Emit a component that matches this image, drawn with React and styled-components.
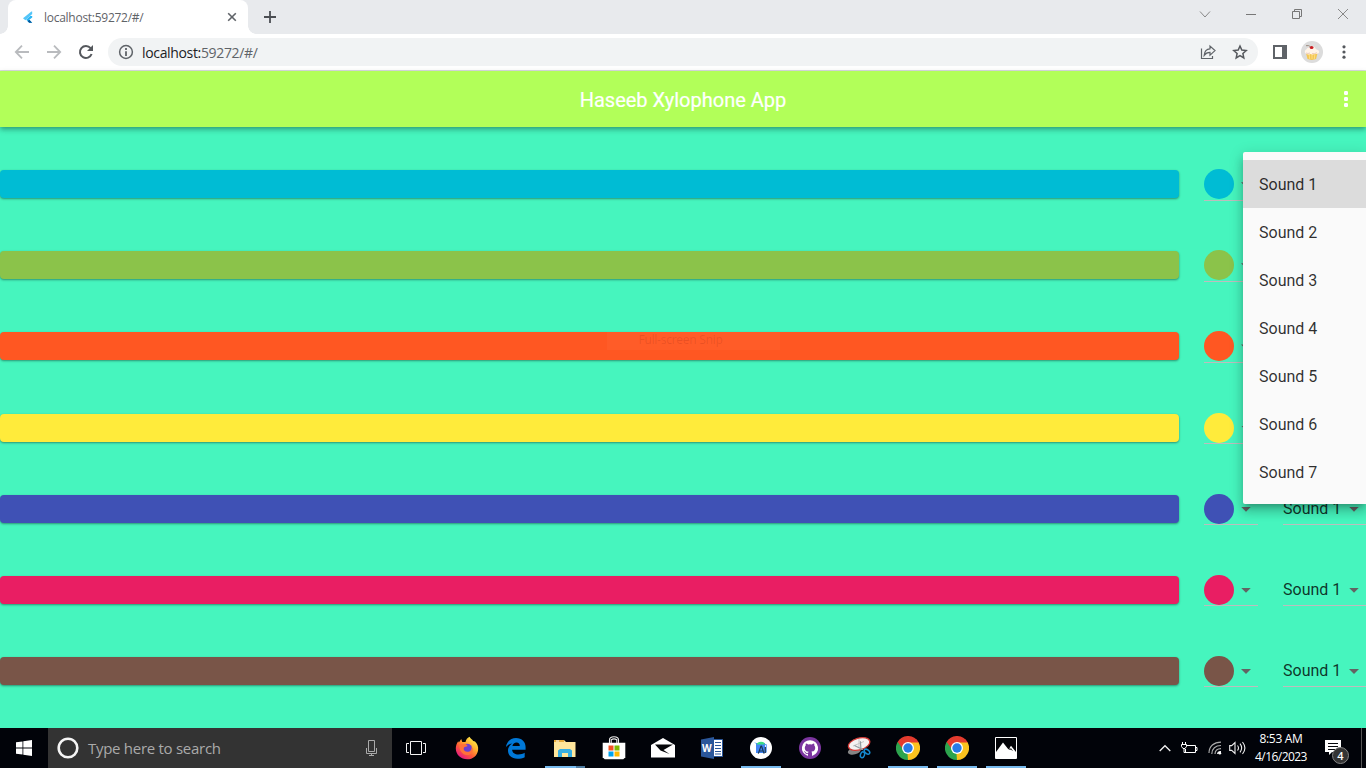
import React from "react";
import styled, { createGlobalStyle } from "styled-components";

const Global = createGlobalStyle`
  * { box-sizing: border-box; }
  html, body { margin: 0; padding: 0; overflow: hidden; }
  svg { display: block; flex: none; }
`;

const uiFont = `"Open Sans", "Noto Sans", sans-serif`;

const Screen = styled.div`
  width: 1366px;
  height: 768px;
  display: flex;
  flex-direction: column;
  overflow: hidden;
  font-family: Roboto, sans-serif;
`;

/* ---------- browser chrome ---------- */

const TabStrip = styled.div`
  height: 34px;
  background: #e8eaed;
  display: flex;
  align-items: stretch;
  padding-left: 8px;
`;

const Tab = styled.div`
  position: relative;
  width: 240px;
  background: #fff;
  border-radius: 8px 8px 0 0;
  display: flex;
  align-items: center;
  padding: 0 10px 0 13px;
  font: 12px ${uiFont};
  letter-spacing: -0.27px;
  color: #5f6368;
  &::before, &::after {
    content: "";
    position: absolute;
    bottom: 0;
    width: 8px;
    height: 8px;
  }
  &::before { left: -8px; background: radial-gradient(circle at 0 0, transparent 7.5px, #fff 8px); }
  &::after { right: -8px; background: radial-gradient(circle at 100% 0, transparent 7.5px, #fff 8px); }
`;

const TabTitle = styled.span`
  flex: 1;
  margin-left: 8px;
`;

const NewTab = styled.div`
  display: flex;
  align-items: center;
  margin-left: 15px;
`;

const WindowButtons = styled.div`
  margin-left: auto;
  display: flex;
  padding: 6px 15px 0 0;
  gap: 30px;
  height: 22px;
`;

const Toolbar = styled.div`
  height: 37px;
  background: #fff;
  border-bottom: 1px solid #dadce0;
  display: flex;
  align-items: center;
  padding: 0 20px 0 14px;
`;

const NavIcons = styled.div`
  display: flex;
  gap: 16px;
  width: 94px;
`;

const AddressBar = styled.div`
  flex: none;
  width: 1150px;
  height: 28px;
  border-radius: 14px;
  background: #f1f3f4;
  display: flex;
  align-items: center;
  padding: 0 10px;
  font: 14px ${uiFont};
  letter-spacing: -0.34px;
  color: #5f6368;
`;

const Address = styled.span`
  flex: 1;
  margin-left: 8px;
  b { font-weight: 400; color: #202124; }
`;

const BarActions = styled.div`
  display: flex;
  gap: 16px;
`;

const ToolbarEnd = styled.div`
  flex: 1;
  display: flex;
  align-items: center;
  padding-left: 15px;
  gap: 14px;
  & > :last-child { margin-left: auto; }
`;

/* ---------- app ---------- */

const AppBar = styled.header`
  position: relative;
  z-index: 1;
  height: 56px;
  background: #b2ff59;
  color: #fff;
  display: flex;
  align-items: center;
  justify-content: center;
  padding-top: 2px;
  box-shadow: 0 2px 4px -1px rgba(0,0,0,.2), 0 4px 5px rgba(0,0,0,.14), 0 1px 6px rgba(0,0,0,.1);
`;

const AppTitle = styled.span`
  font-size: 20px;
  -webkit-text-stroke: 0.2px #fff;
`;

const MoreButton = styled.div`
  position: absolute;
  right: 18px;
  top: 20px;
`;

const Body = styled.main`
  position: relative;
  height: 601px;
  background: #46f5be;
  display: flex;
  flex-direction: column;
  justify-content: space-evenly;
`;

const Row = styled.div`
  height: 48px;
  display: flex;
  align-items: center;
`;

const Bar = styled.div`
  width: 1179px;
  height: 28px;
  border-radius: 4px;
  background: ${(p) => p.$color};
  box-shadow: 0 1px 2px rgba(0,0,0,.28), 0 1px 3px rgba(0,0,0,.14);
  display: flex;
  justify-content: center;
`;

const SnipHint = styled.div`
  width: 173px;
  height: 18px;
  margin-left: 207px;
  padding-left: 32px;
  background: rgba(255,255,255,.03);
  color: rgba(90,0,0,.12);
  font: 12px/15px ${uiFont};
  letter-spacing: -0.25px;
`;

const Picker = styled.div`
  width: ${(p) => p.$width}px;
  height: 33px;
  margin-left: 25px;
  padding: 1px 7px 0 0;
  flex: none;
  display: flex;
  align-items: center;
  justify-content: space-between;
  border-bottom: 1px solid #bdbdbd;
  font-size: 16px;
  color: rgba(0,0,0,.8);
`;

const PickerValue = styled.span`
  margin-bottom: 1px;
`;

const Dot = styled.div`
  width: 30px;
  height: 30px;
  border-radius: 50%;
  background: ${(p) => p.$color};
`;

const Arrow = styled.div`
  width: 10px;
  height: 5px;
  margin-top: 1px;
  background: #636363;
  clip-path: polygon(0 0, 100% 0, 50% 100%);
`;

const Menu = styled.div`
  position: absolute;
  z-index: 2;
  left: 1243px;
  top: 25px;
  width: 123px;
  height: 352px;
  padding: 8px 0;
  background: #fafafa;
  border-radius: 2px 0 0 2px;
  box-shadow: 0 5px 5px -3px rgba(0,0,0,.2), 0 8px 10px 1px rgba(0,0,0,.14), 0 3px 14px 2px rgba(0,0,0,.12);
`;

const MenuItem = styled.div`
  height: 48px;
  padding: 1px 0 0 16px;
  display: flex;
  align-items: center;
  font-size: 16px;
  color: rgba(0,0,0,.82);
  background: ${(p) => (p.$active ? "#dcdcdc" : "transparent")};
`;

/* ---------- taskbar ---------- */

const Taskbar = styled.footer`
  height: 40px;
  background: #010309;
  display: flex;
  color: #fff;
  font-family: ${uiFont};
`;

const Start = styled.div`
  width: 48px;
  display: flex;
  align-items: center;
  justify-content: center;
`;

const Search = styled.div`
  width: 344px;
  background: #333;
  display: flex;
  align-items: center;
  padding: 0 14px 0 9px;
  font-size: 15px;
  letter-spacing: -0.28px;
  color: #aaa;
`;

const SearchText = styled.span`
  flex: 1;
  margin-left: 9px;
`;

const TaskViewButton = styled.div`
  width: 48px;
  margin-right: 2px;
  display: flex;
  align-items: center;
  justify-content: center;
`;

const Slot = styled.div`
  position: relative;
  width: 49px;
  display: flex;
  align-items: center;
  justify-content: center;
`;

const RunningMark = styled.div`
  position: absolute;
  left: 5px;
  bottom: 0;
  width: 40px;
  height: 2px;
  background: ${(p) =>
    p.$stacked ? "linear-gradient(90deg, #76b9ed 31px, #4d7ba0 31px)" : "#76b9ed"};
`;

const Tray = styled.div`
  margin-left: auto;
  display: flex;
  align-items: center;
`;

const TrayIcons = styled.div`
  display: flex;
  align-items: center;
  gap: 10px;
  & > :last-child { margin-left: -3px; }
`;

const Clock = styled.div`
  width: 72px;
  text-align: center;
  font-size: 12px;
  line-height: 18px;
  letter-spacing: -0.55px;
  margin: -1px 0 0 -2px;
`;

const ClockTime = styled.div`
  letter-spacing: -0.3px;
`;

const Notifications = styled.div`
  position: relative;
  width: 26px;
  height: 40px;
  padding: 11px 0 0 8px;
`;

const Count = styled.div`
  position: absolute;
  left: 15px;
  top: 19px;
  width: 17px;
  height: 17px;
  border: 1px solid #858585;
  border-radius: 50%;
  background: #343434;
  font-size: 11px;
  font-weight: 600;
  line-height: 15px;
  text-align: center;
`;

const ShowDesktop = styled.div`
  width: 5px;
  height: 40px;
  border-left: 1px solid #555;
  margin-left: 18px;
`;

/* ---------- icons ---------- */

const Svg = ({ w, h = w, children, ...rest }) => (
  <svg width={w} height={h} viewBox={`0 0 ${w} ${h}`} fill="none" {...rest}>{children}</svg>
);

const FlutterLogo = () => (
  <Svg w={15} h={16}>
    <path d="M10.4 2.5 2 9.2 4.4 11.3 11.2 4.9V2.5Z" fill="#54c5f8" />
    <path d="M11.2 6.9H9.2L5.2 10.8 8.2 13.8H11.2L8.3 10.8 11.2 8.4Z" fill="#29b6f6" />
    <path d="m6.6 12.3 1.7-1.5 2.9 3H8.1Z" fill="#01579b" />
  </Svg>
);

const CloseIcon = () => (
  <Svg w={12}><path d="m2.2 2.2 7.6 7.6M9.8 2.2 2.2 9.8" stroke="#5f6368" strokeWidth="1.6" /></Svg>
);

const PlusIcon = () => (
  <Svg w={14}><path d="M7 1v12M1 7h12" stroke="#4b4e53" strokeWidth="1.8" /></Svg>
);

const Back = () => (
  <Svg w={16}><path d="M15 8H2M8 1.7 1.8 8 8 14.3" stroke="#b9bbbe" strokeWidth="1.8" /></Svg>
);

const Forward = () => (
  <Svg w={16}><path d="M1 8h13M8 1.7 14.2 8 8 14.3" stroke="#b9bbbe" strokeWidth="1.8" /></Svg>
);

const Reload = () => (
  <Svg w={16}>
    <path d="M13.6 10A6 6 0 1 1 12.6 4.2" stroke="#55585d" strokeWidth="2" />
    <path d="M15 1v6H9Z" fill="#55585d" />
  </Svg>
);

const InfoIcon = () => (
  <Svg w={16}>
    <circle cx="8" cy="8" r="6.4" stroke="#5f6368" strokeWidth="1.5" />
    <path d="M8 7.2V12M8 4v1.9" stroke="#5f6368" strokeWidth="1.8" />
  </Svg>
);

const ShareIcon = () => (
  <Svg w={16}>
    <path d="M1.5 4.5v10h11V12" stroke="#5f6368" strokeWidth="1.2" />
    <path d="M10 2v2.8C6.4 5 4.5 7 4.2 11.3 5.5 9.4 7.2 8.4 10 8.4v2.7l5-4.5Z" stroke="#5f6368" strokeWidth="1.2" />
  </Svg>
);

const StarIcon = () => (
  <Svg w={16}>
    <path d="m8 2 1.8 4.1 4.4.4-3.3 3 .9 4.4L8 11.6l-3.8 2.3.9-4.4-3.3-3 4.4-.4Z" stroke="#55585d" strokeWidth="1.5" />
  </Svg>
);

const SidePanel = () => (
  <Svg w={14}>
    <path d="M1 1h12v12H1Z" stroke="#5f6368" strokeWidth="2" />
    <path d="M9 1h4v12H9Z" fill="#5f6368" />
  </Svg>
);

const Cupcake = () => (
  <Svg w={22}>
    <circle cx="11" cy="11" r="11" fill="#dcdcdc" />
    <path d="m4.9 11.5 1.6 6.6q4.2 1.6 8.6 0l1.6-6.6Z" fill="#f3c654" />
    <path d="m8 12 .7 6M11 12v6M14 12l-.7 6" stroke="#ffdf83" />
    <path d="M3.8 10.7C3.8 8.8 5.6 8.9 6 7.6 6.8 6 9 6.8 10 6c2-1.4 4.1 0 4.5 1.4.2 1 3.7 1.3 3.7 3.4 0 2.2-3.2 2.5-4.2 1.9-1.4 1.1-3 .8-4 .2-2 1-6.2.6-6.2-2.2Z" fill="#fff4e8" />
    <path d="M5 12q2 1 4 0M11 12.5q2.5.6 5-.8" stroke="#e6bba9" strokeWidth=".7" />
    <ellipse cx="10.6" cy="6.6" rx="1.9" ry="1.5" fill="#c91d24" />
    <path d="M9.5 5.7Q7.7 4 5 4.7" stroke="#8b7364" strokeWidth=".8" />
  </Svg>
);

const KebabDark = () => (
  <Svg w={4} h={14}>
    {[1.8, 7, 12.2].map((y) => <circle key={y} cx="2" cy={y} r="1.6" fill="#55585d" />)}
  </Svg>
);

const KebabWhite = () => (
  <Svg w={4} h={16}>
    {[2, 8, 14].map((y) => <rect key={y} x="0" y={y - 2} width="4" height="4" rx="1.2" fill="#fff" />)}
  </Svg>
);

const WindowsLogo = () => (
  <Svg w={16}>
    <path d="M0 2.3 6.5 1.4V7.5H0ZM7.3 1.3 16 0v7.5H7.3ZM0 8.4h6.5v6.2L0 13.7ZM7.3 8.4H16V16l-8.7-1.2Z" fill="#fff" />
  </Svg>
);

const Cortana = () => (
  <Svg w={22}><circle cx="11" cy="11" r="9.3" stroke="#f5f5f5" strokeWidth="2.6" /></Svg>
);

const Mic = () => (
  <Svg w={13} h={17}>
    <path d="M3.5.5h6v11h-6ZM1.5 8v5.5h10V8M6.5 13.5V16M4 15.5h5" stroke="#aaa" />
  </Svg>
);

const TaskView = () => (
  <Svg w={20} h={15}>
    <path d="M4.5.5h11v13h-11ZM3 2.5H.5v9H3M17 2.5h2.5v9H17" stroke="#f4f4f4" />
  </Svg>
);

const Firefox = () => (
  <Svg w={24}>
    <defs>
      <linearGradient id="ff" x1="20" y1="2" x2="5" y2="22" gradientUnits="userSpaceOnUse">
        <stop stopColor="#fff44f" /><stop offset=".35" stopColor="#ffb02e" />
        <stop offset=".65" stopColor="#ff5a36" /><stop offset="1" stopColor="#e31587" />
      </linearGradient>
    </defs>
    <path d="M14.5.8c1 1.8 2.6 2.6 3.7 4.1l1.8.6c2.2 2.4 3.6 5.1 3.1 8.5C22.4 19.7 18 23.3 12.3 23.3 6 23.3.8 18.7.8 12.5c0-2.5.8-5.2 2.4-7.3l.7 1.3L6.2 3.1l1.1 2.8h3.2c.6-2.3 1.8-4 4-5.1Z" fill="url(#ff)" />
    <circle cx="12.2" cy="12.8" r="5" fill="#6b3fd0" />
    <path d="M4.5 8.5 10.7 8l2 1.9c-1.4.7-3 .6-3.8 1.8-.8 1.5.3 3.7 3 4.1 3.3.4 5.1-2.2 4.6-5.4 3.2 3.8.3 8.9-4.7 8.6-5.1-.3-8-5.5-7.3-10.5Z" fill="#ff7139" />
  </Svg>
);

const Edge = () => (
  <Svg w={22}>
    <path d="M.8 10.5C1.8 4.5 5.6.9 11 .9c6.2 0 9.8 4.3 9.6 9.5v2.3H7.1c.2 3.2 3 4.7 6.2 4.7 2.6 0 4.7-.6 6.4-1.6v4.4c-2.1 1.1-4.5 1.6-7.3 1.6-6 0-9.4-3.5-9.4-8.2 0-3.1 1.7-5.7 4.2-7.1-3 .4-4.9 1.9-6.4 4ZM7.4 9h7.4c0-2.3-1.1-3.5-3.2-3.5-2.2 0-3.7 1.4-4.2 3.5Z" fill="#0078d7" />
  </Svg>
);

const Explorer = () => (
  <Svg w={22} h={19}>
    <path d="M0 1h10l2 2h9.5v15H0Z" fill="#ffe69b" />
    <path d="M0 1h10v2H0Z" fill="#e8ab3a" /><path d="M2 1.5h3v1H2Z" fill="#fff" />
    <path d="M4 18v-6.5l2-1.5h10l2 1.5V18h-4v-4H8v4Z" fill="#37afe3" />
  </Svg>
);

const Store = () => (
  <Svg w={24}>
    <path d="M.7 6.8h22.6v14.5l-2 2H2.7l-2-2Z" fill="#fff" />
    <path d="M7.5 7V4q0-3.2 4.5-3.2T16.5 4v3M9.2 7V3.8Q12 2 14.8 3.8V7" stroke="#eee" strokeWidth="1.1" />
    <path d="M6.5 9.5h5v5h-5Z" fill="#f25022" /><path d="M12.5 9.5h5v5h-5Z" fill="#7fba00" />
    <path d="M6.5 15.5h5v5h-5Z" fill="#00a4ef" /><path d="M12.5 15.5h5v5h-5Z" fill="#ffb900" />
  </Svg>
);

const Mail = () => (
  <Svg w={24} h={20}>
    <path d="M0 7 12 0l12 7v12.5H0Z" fill="#fff" />
    <path d="M4 6.5h18L12.5 12l6 4-9-3.5Z" fill="#050609" />
  </Svg>
);

const WordLabel = styled.span`
  position: absolute;
  left: 15px;
  top: 12px;
  font: 700 10px/16px ${uiFont};
`;

const Word = () => (
  <>
    <Svg w={22}>
      <path d="M10 2.5h11.5v17H10Z" fill="#fff" stroke="#2b579a" />
      <path d="M14 5.5h6M14 8.5h6M14 11.5h6M14 14.5h6M14 17h6" stroke="#2b579a" />
      <path d="m0 2.5 13-2.4v21.8L0 19.5Z" fill="#2b579a" />
    </Svg>
    <WordLabel>W</WordLabel>
  </>
);

const AndroidStudio = () => (
  <Svg w={22}>
    <circle cx="11" cy="11" r="11" fill="#fff" />
    <path d="M6 6h9v10H6Z" fill="#4285f4" />
    <path d="M6.5 7.5Q7.5 4.8 11 4.8t4 2.7Z" fill="#3ddc84" />
    <path d="M5.8 6.5 5 5.5M14.8 7.5h1.5v8" stroke="#5c99f7" />
    <path d="m8.3 16.6 2.5-7h.9l2.4 7M9.2 14h4M11.2 10V8.5M15.3 10v6" stroke="#173752" strokeWidth="1.2" />
  </Svg>
);

const GitHub = () => (
  <Svg w={22}>
    <circle cx="11" cy="11" r="11" fill="#7b35a0" />
    <path d="M11 3.2a8 8 0 0 0-2.6 15.6c.4 0 .6-.2.6-.4v-1.6c-2.2.5-2.8-.6-3.1-1.2-.3-.8-.9-1-1.1-1.3.9-.3 1.6.6 2 1.1.7.9 1.6.7 2.3.4l.5-1c-2-.3-3.8-1-3.8-4 0-.9.3-1.6.9-2.2-.1-.8 0-1.5.2-2.2.9 0 1.6.5 2.2 1q1.9-.4 3.8 0c.6-.5 1.3-.9 2.2-1 .2.7.3 1.4.2 2.2.6.6.9 1.3.9 2.2 0 3-1.8 3.7-3.8 4 .5.4.6 1 .6 1.9v1.7c0 .2.2.4.6.4A8 8 0 0 0 11 3.2Z" fill="#fff" />
  </Svg>
);

const Snip = () => (
  <Svg w={24}>
    <ellipse cx="7.3" cy="15" rx="6.6" ry="3.4" fill="#858585" transform="rotate(-13 7.3 15)" />
    <ellipse cx="12.1" cy="8" rx="11" ry="5.9" fill="#f4f2f2" stroke="#d53a36" strokeWidth="1.3" transform="rotate(-16 12.1 8)" />
    <path d="M12 3v9M6 10l11-4.5" stroke="#c5c5c5" />
    <path d="m7.5 9.5 8.5 4.3M13.4 5.3 14 14" stroke="#919ca0" strokeWidth="1.2" />
    <ellipse cx="15.5" cy="18.8" rx="2" ry="3" stroke="#168ad0" strokeWidth="1.5" transform="rotate(20 15.5 18.8)" />
    <ellipse cx="20" cy="15.7" rx="1.9" ry="3.1" stroke="#168ad0" strokeWidth="1.5" transform="rotate(-52 20 15.7)" />
  </Svg>
);

const Chrome = () => (
  <Svg w={24}>
    <path d="M12 12 1.6 6A12 12 0 0 1 22.4 6Z" fill="#e33b2e" />
    <path d="M12 12 12 24A12 12 0 0 1 1.6 6Z" fill="#2da44e" />
    <path d="M12 12V24A12 12 0 0 0 22.4 6H12Z" fill="#fcc31e" />
    <path d="m12 24 5.2-9-6-1Z" fill="#fcc31e" />
    <path d="M1.6 6 6.8 13 12 6.6h10.7L20 3Z" fill="#e33b2e" />
    <path d="m1.6 6 5.2 9L2 16Z" fill="#2da44e" />
    <circle cx="12" cy="12" r="6" fill="#fff" /><circle cx="12" cy="12" r="4.7" fill="#277be8" />
  </Svg>
);

const Photos = () => (
  <Svg w={22}>
    <path d="M.5.5h21v21H.5Z" fill="#020307" stroke="#fff" />
    <path d="M1 15 8 5.5l5.5 7L16 8.8l5 6.2v6H1Z" fill="#fff" />
    <path d="m13.4 9.5 1 2.5.7 1 .7-1.5 1.6 2.2" stroke="#111" strokeWidth=".8" />
  </Svg>
);

const Chevron = () => (
  <Svg w={12} h={8}><path d="m.7 7 5.3-5.3L11.3 7" stroke="#f2f2f2" strokeWidth="1.3" /></Svg>
);

const Battery = () => (
  <Svg w={17} h={14}>
    <path d="M6 4.5h8.5v7H4.5V8M15 6.5h1v3h-1M1.5 1v2.5M4.5 1v2.5M.5 3.5h5v2l-1.5 2H2L.5 5.5ZM3 7.5v4h2" stroke="#fff" />
  </Svg>
);

const Wifi = () => (
  <Svg w={14} h={14}>
    <path d="M1 12C1 5 6 1.2 13 1.2M3.8 13C3.8 7.5 7.5 4.5 13 4.5M7 13c0-3.4 2.3-5.3 6-5.3" stroke="#aaa" strokeWidth="1.2" />
    <path d="M9.7 13c0-1.6 1.3-2.5 3.3-2.5" stroke="#fff" strokeWidth="1.2" /><circle cx="11.8" cy="12.2" r="1.4" fill="#fff" />
  </Svg>
);

const Volume = () => (
  <Svg w={18} h={14}>
    <path d="M.7 4.6h2L6 1.5v11L2.7 9.4h-2ZM8.5 4.5q2 2.5 0 5M11 2.7q3.3 4.3 0 8.6M13.5 1q4.8 6 0 12" stroke="#eee" strokeWidth="1.1" />
  </Svg>
);

const NotesIcon = () => (
  <Svg w={16} h={17}>
    <path d="M0 1h16v12H7l-3 3v-3H0Z" fill="#fff" />
    <path d="M3 4.5h10M3 7.5h10M3 10.5h7" stroke="#05070c" />
  </Svg>
);

const MENU_ROWS = 4;

const COLORS = ["#00bcd4", "#8bc34a", "#ff5722", "#ffeb3b", "#3f51b5", "#e91e63", "#795548"];

const APPS = [
  { icon: <Firefox /> },
  { icon: <Edge /> },
  { icon: <Explorer />, running: true, stacked: true },
  { icon: <Store /> },
  { icon: <Mail /> },
  { icon: <Word /> },
  { icon: <AndroidStudio />, running: true },
  { icon: <GitHub /> },
  { icon: <Snip /> },
  { icon: <Chrome />, running: true },
  { icon: <Chrome />, running: true },
  { icon: <Photos />, running: true },
];

export default function App() {
  return (
    <Screen>
      <Global />
      <TabStrip>
        <Tab>
          <FlutterLogo />
          <TabTitle>localhost:59272/#/</TabTitle>
          <CloseIcon />
        </Tab>
        <NewTab><PlusIcon /></NewTab>
        <WindowButtons>
          <Svg w={16}><path d="m3 5.5 5 5.5 5-5.5" stroke="#888" /></Svg>
          <Svg w={16}><path d="M3 8.5h10" stroke="#777" /></Svg>
          <Svg w={16}><path d="M3.5 5.5h7v7h-7ZM5.5 5V3.5h7v7H11" stroke="#777" /></Svg>
          <Svg w={16}><path d="m3 3 10 10M13 3 3 13" stroke="#888" /></Svg>
        </WindowButtons>
      </TabStrip>
      <Toolbar>
        <NavIcons><Back /><Forward /><Reload /></NavIcons>
        <AddressBar>
          <InfoIcon />
          <Address><b>localhost:</b>59272/#/</Address>
          <BarActions><ShareIcon /><StarIcon /></BarActions>
        </AddressBar>
        <ToolbarEnd><SidePanel /><Cupcake /><KebabDark /></ToolbarEnd>
      </Toolbar>

      <AppBar>
        <AppTitle>Haseeb Xylophone App</AppTitle>
        <MoreButton><KebabWhite /></MoreButton>
      </AppBar>
      <Body>
        {COLORS.map((c, i) => (
          <Row key={c}>
            <Bar $color={c}>{i === 2 && <SnipHint>Full-screen Snip</SnipHint>}</Bar>
            <Picker $width={54}><Dot $color={c} /><Arrow /></Picker>
            {/* the open menu takes the place of the first rows' sound pickers */}
            {i >= MENU_ROWS && (
              <Picker $width={83}><PickerValue>Sound 1</PickerValue><Arrow /></Picker>
            )}
          </Row>
        ))}
        <Menu>
          {[1, 2, 3, 4, 5, 6, 7].map((n) => (
            <MenuItem key={n} $active={n === 1}>Sound {n}</MenuItem>
          ))}
        </Menu>
      </Body>

      <Taskbar>
        <Start><WindowsLogo /></Start>
        <Search><Cortana /><SearchText>Type here to search</SearchText><Mic /></Search>
        <TaskViewButton><TaskView /></TaskViewButton>
        {APPS.map((a, i) => (
          <Slot key={i}>
            {a.icon}
            {a.running && <RunningMark $stacked={a.stacked} />}
          </Slot>
        ))}
        <Tray>
          <TrayIcons><Chevron /><Battery /><Wifi /><Volume /></TrayIcons>
          <Clock><ClockTime>8:53 AM</ClockTime>4/16/2023</Clock>
          <Notifications><NotesIcon /><Count>4</Count></Notifications>
          <ShowDesktop />
        </Tray>
      </Taskbar>
    </Screen>
  );
}
